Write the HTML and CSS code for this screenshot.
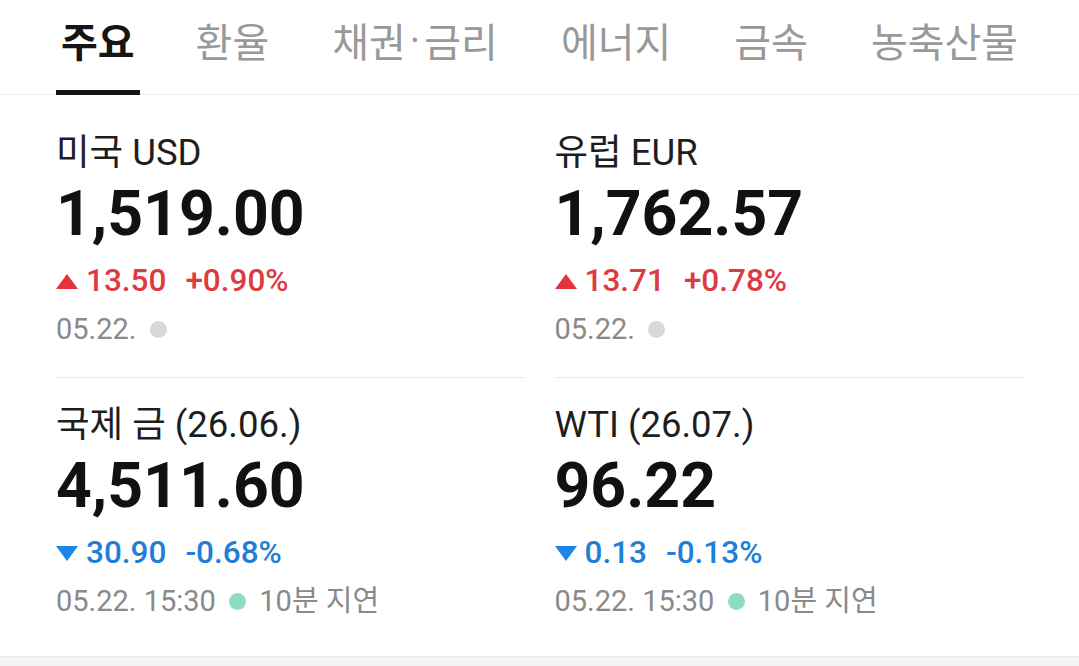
FILE: index.html
```html
<!DOCTYPE html>
<html lang="ko">
<head>
    <meta charset="UTF-8">
    <meta name="viewport" content="width=device-width, initial-scale=1.0">
    <link rel="stylesheet" href="styles.css">
    <title>시세</title>
</head>
<body>
    <nav class="tabs">
        <a class="tab active">주요</a>
        <a class="tab">환율</a>
        <a class="tab">채권<span class="mid">·</span>금리</a>
        <a class="tab">에너지</a>
        <a class="tab">금속</a>
        <a class="tab">농축산물</a>
    </nav>

    <div class="quotes">
        <div class="quote first-row">
            <div class="name">미국 USD</div>
            <div class="price">1,519.00</div>
            <div class="change up">
                <span class="arrow"></span>
                <span class="diff">13.50</span>
                <span class="rate">+0.90%</span>
            </div>
            <div class="time">05.22. <span class="dot closed"></span></div>
        </div>
        <div class="quote first-row">
            <div class="name">유럽 EUR</div>
            <div class="price">1,762.57</div>
            <div class="change up">
                <span class="arrow"></span>
                <span class="diff">13.71</span>
                <span class="rate">+0.78%</span>
            </div>
            <div class="time">05.22. <span class="dot closed"></span></div>
        </div>
        <div class="quote">
            <div class="name">국제 금 (26.06.)</div>
            <div class="price">4,511.60</div>
            <div class="change down">
                <span class="arrow"></span>
                <span class="diff">30.90</span>
                <span class="rate">-0.68%</span>
            </div>
            <div class="time">05.22. 15:30 <span class="dot live"></span> 10분 지연</div>
        </div>
        <div class="quote">
            <div class="name">WTI (26.07.)</div>
            <div class="price">96.22</div>
            <div class="change down">
                <span class="arrow"></span>
                <span class="diff">0.13</span>
                <span class="rate">-0.13%</span>
            </div>
            <div class="time">05.22. 15:30 <span class="dot live"></span> 10분 지연</div>
        </div>
    </div>

    <div class="footer-band"></div>
</body>
</html>
```

FILE: styles.css
```css
body {
    margin: 0;
    background-color: #fff;
    font-family: Roboto, "Noto Sans CJK KR", sans-serif;
    color: #111;
}

.tabs {
    display: flex;
    gap: 49px;
    padding: 0 56px;
    border-bottom: 1px solid #ececec;
    height: 94px;
}

.tab {
    display: flex;
    align-items: center;
    padding: 0 7px 10px;
    font-size: 40px;
    color: #999;
    border-bottom: 5px solid transparent;
    margin-bottom: -1px;
    box-sizing: border-box;
    white-space: nowrap;
}

.tab .mid {
    margin: 0 4px;
}

.tab.active {
    color: #151515;
    font-weight: bold;
    border-bottom-color: #151515;
    padding: 0 5px 10px;
}

.quotes {
    display: grid;
    grid-template-columns: 1fr 1fr;
    column-gap: 30px;
    padding: 11px 56px 7px;
}

.quote {
    padding: 25px 0 28px;
}

.first-row {
    border-bottom: 1px solid #e8e8e8;
}

.name {
    font-size: 36.5px;
    line-height: 44px;
    color: #1e1e1e;
}

.price {
    margin-top: 3px;
    font-size: 62.5px;
    line-height: 72px;
    font-weight: bold;
    color: #111;
}

.change {
    display: flex;
    align-items: center;
    margin-top: 11px;
    font-size: 31.5px;
    line-height: 40px;
    font-weight: 500;
}

.change .diff {
    margin-left: 8px;
}

.change .rate {
    margin-left: 19px;
}

.up {
    color: #dd3b3f;
}

.down {
    color: #1f7ed6;
}

.arrow {
    width: 0;
    height: 0;
    border-left: 11px solid transparent;
    border-right: 11px solid transparent;
}

.up .arrow {
    border-bottom: 15px solid #e5333b;
}

.down .arrow {
    border-top: 15px solid #1a86e8;
}

.time {
    display: flex;
    align-items: center;
    margin-top: 8px;
    font-size: 29px;
    line-height: 40px;
    color: #8a8a8a;
    white-space: pre;
}

.dot {
    display: inline-block;
    width: 17px;
    height: 17px;
    border-radius: 50%;
    margin: 0 6px;
}

.dot.closed {
    background-color: #d6d8dc;
}

.dot.live {
    background-color: #8fdcc5;
}

.footer-band {
    height: 20px;
    background-color: #f3f4f6;
    border-top: 1px solid #ebecee;
}
```
